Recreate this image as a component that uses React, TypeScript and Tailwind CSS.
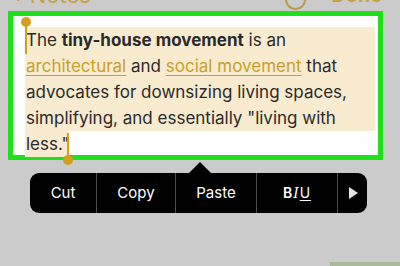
import { Fragment } from 'react';

const gold = '#d49f1c';

function Divider() {
  return <div className="w-px self-stretch bg-[#4a4a4a]" />;
}

export default function App() {
  return (
    <div className="relative w-[400px] h-[266px] overflow-hidden bg-[#cbcbcb] font-['Inter',sans-serif]">
      {/* top nav, mostly cut off */}
      <div className="h-[11px] overflow-hidden">
        <div className="-mt-[17px] flex h-[24px] items-center pl-[12px] pr-[18px] text-[22px] leading-[24px] text-[#c7a048]">
          <span className="text-[24px] font-light">‹</span>
          <span className="ml-[9px]">Notes</span>
          <span className="ml-auto mr-[25px] mt-[8px] h-[21px] w-[21px] rounded-full border-2 border-[#b8995a]" />
          <span className="text-[20px] font-semibold">Done</span>
        </div>
      </div>

      {/* note card */}
      <div className="ml-[8px] w-[375px] h-[149px] border-[5px] border-[#1fe01a] bg-white pt-[11px] pl-[12px] pr-[3px]">
        <div className="text-[17px] leading-[26px] text-[#2a2a2a]">
          <div className="bg-[#f8ebd0] pl-[1px]">
            The <span className="font-bold">tiny-house movement</span> is an
            <br />
            <span className="text-[#c9a02b] underline decoration-1 underline-offset-[3px]">architectural</span> and{' '}
            <span className="text-[#c9a02b] underline decoration-1 underline-offset-[3px]">social movement</span> that
            <br />
            advocates for downsizing living spaces,
            <br />
            simplifying, and essentially "living with
          </div>
          <div className="w-[43px] bg-[#f8ebd0] pl-[1px]">less."</div>
        </div>
      </div>

      {/* selection handles */}
      <div className="absolute left-[21px] top-[17px] h-[10px] w-[10px] rounded-full" style={{ background: gold }} />
      <div className="absolute left-[25px] top-[22px] h-[32px] w-[2px]" style={{ background: gold }} />
      <div className="absolute left-[67px] top-[133px] h-[26px] w-[2px]" style={{ background: gold }} />
      <div className="absolute left-[63px] top-[155px] h-[10px] w-[10px] rounded-full" style={{ background: gold }} />

      {/* edit menu */}
      <div className="relative ml-[30px] mt-[13px] flex h-[40px] w-[337px] items-center rounded-[9px] bg-black text-[15px] text-white">
        <div className="absolute -top-[11px] left-[159px] h-0 w-0 border-x-[11px] border-b-[11px] border-x-transparent border-b-black" />
        {[
          { label: 'Cut', w: 'w-[66px]' },
          { label: 'Copy', w: 'w-[78px]' },
          { label: 'Paste', w: 'w-[80px]' },
        ].map((item) => (
          <Fragment key={item.label}>
            <div className={`${item.w} text-center`}>{item.label}</div>
            <Divider />
          </Fragment>
        ))}
        <div className="w-[80px] text-center text-[14px] font-semibold tracking-[1px]">
          B<span className="font-['DejaVu_Serif',serif] font-normal italic">I</span>
          <span className="underline underline-offset-2 font-normal">U</span>
        </div>
        <Divider />
        <div className="flex flex-1 justify-center">
          <svg width="10" height="12" viewBox="0 0 10 12">
            <path d="M1 0 L10 6 L1 12 Z" fill="#e6e6e6" />
          </svg>
        </div>
      </div>

      <div className="absolute bottom-0 right-0 h-[4px] w-[70px] bg-[#a9b99a]" />
    </div>
  );
}
